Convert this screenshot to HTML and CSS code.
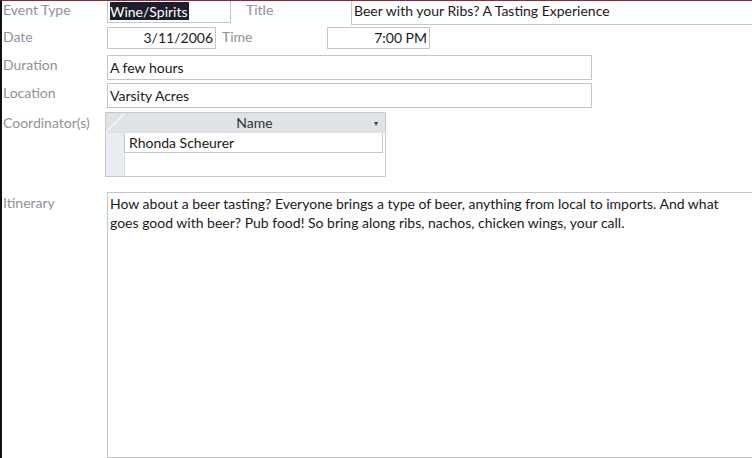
FILE: index.html
```html
<!DOCTYPE html>
<html lang="en">
<head>
    <meta charset="UTF-8">
    <meta name="viewport" content="width=device-width, initial-scale=1.0">
    <title>Event Details</title>
    <link rel="stylesheet" href="styles.css">
</head>
<body>

    <div class="form">
        <!-- Event type and title -->
        <div class="row row-first">
            <div class="label">Event Type</div>
            <div class="field field-type"><span class="selected">Wine/Spirits</span></div>
            <div class="label label-title">Title</div>
            <div class="field field-title">Beer with your Ribs? A Tasting Experience</div>
        </div>

        <!-- Date and time -->
        <div class="row row-date">
            <div class="label">Date</div>
            <div class="field field-date">3/11/2006</div>
            <div class="label label-time">Time</div>
            <div class="field field-time">7:00 PM</div>
        </div>

        <div class="row row-wide">
            <div class="label">Duration</div>
            <div class="field field-wide">A few hours</div>
        </div>

        <div class="row row-wide">
            <div class="label">Location</div>
            <div class="field field-wide">Varsity Acres</div>
        </div>

        <!-- Coordinator subform -->
        <div class="row row-sub">
            <div class="label">Coordinator(s)</div>
            <div class="subform">
                <div class="sub-head">
                    <div class="selector corner"></div>
                    <div class="sub-col">Name<span class="arrow">&#9662;</span></div>
                </div>
                <div class="sub-row">
                    <div class="selector"></div>
                    <div class="sub-cell">Rhonda Scheurer</div>
                </div>
                <div class="sub-row sub-new">
                    <div class="selector"></div>
                    <div class="sub-cell empty"></div>
                </div>
            </div>
        </div>

        <div class="row row-notes">
            <div class="label">Itinerary</div>
            <div class="field field-notes">How about a beer tasting? Everyone brings a type of beer, anything from local to imports. And what goes good with beer? Pub food! So bring along ribs, nachos, chicken wings, your call.</div>
        </div>
    </div>

</body>
</html>
```

FILE: styles.css
```css
body {
    margin: 0;
    background-color: #fff;
    font-family: Lato, "Open Sans", sans-serif;
    font-size: 14px;
    color: #1a1a1a;
    overflow: hidden;
}

.form {
    height: 458px;
    box-sizing: border-box;
    border-top: 1px solid #8e2a35;
    border-left: 2px solid #111;
    overflow: hidden;
}

.row {
    display: flex;
    align-items: flex-start;
}

.label {
    width: 104px;
    padding-left: 1px;
    line-height: 19px;
    color: #8d939c;
    flex-shrink: 0;
}

.field {
    box-sizing: border-box;
    border: 1px solid #c6c6c6;
    background-color: #fff;
    padding: 0 2px;
    white-space: nowrap;
    overflow: hidden;
}

.row-first {
    margin-top: -1px;
    height: 28px;
}

.field-type {
    width: 124px;
    height: 23px;
    padding-top: 1px;
    line-height: 19px;
}

.selected {
    background-color: #1d1d2b;
    color: #fff;
    padding: 1px 1px 0 0;
}

.label-title {
    width: 105px;
    padding-left: 15px;
}

.field-title {
    flex: 1;
    height: 25px;
    line-height: 22px;
    border-right: none;
    border-top: none;
}

.row-date {
    height: 28px;
    margin-top: -1px;
}

.field-date,
.field-time {
    height: 22px;
    line-height: 20px;
    text-align: right;
}

.field-date {
    width: 109px;
}

.label-time {
    width: 105px;
    padding-left: 6px;
}

.field-time {
    width: 103px;
}

.row-wide {
    height: 28px;
}

.field-wide {
    width: 485px;
    height: 25px;
    line-height: 23px;
}

.row-sub {
    height: 80px;
    margin-top: 1px;
}

.row-sub .label {
    width: 102px;
    padding-top: 1px;
}

.subform {
    width: 281px;
    height: 65px;
    box-sizing: border-box;
    border: 1px solid #c8c8c8;
    background-color: #fff;
}

.sub-head {
    display: flex;
    height: 20px;
    background-color: #dfe3e8;
}

.selector {
    width: 18px;
    flex-shrink: 0;
    background-color: #e9ecf0;
}

.corner {
    background: linear-gradient(135deg, transparent 45%, #eef0f3 45%, #eef0f3 55%, transparent 55%);
}

.sub-col {
    position: relative;
    flex: 1;
    text-align: center;
    line-height: 20px;
    color: #333;
}

.arrow {
    position: absolute;
    right: 7px;
    top: 0;
    font-size: 8px;
    color: #444;
}

.sub-row {
    display: flex;
    height: 20px;
}

.sub-cell {
    width: 259px;
    box-sizing: border-box;
    border: 1px solid #c8c8c8;
    border-top: none;
    padding-left: 4px;
    line-height: 19px;
}

.sub-cell.empty {
    border: none;
    border-left: 1px solid #dcdcdc;
}

.sub-new {
    height: 23px;
}

.row-notes .label {
    padding-top: 1px;
}

.field-notes {
    flex: 1;
    height: 266px;
    white-space: normal;
    padding: 1px 2px 0 2px;
    line-height: 19px;
    border-right: none;
}
```
